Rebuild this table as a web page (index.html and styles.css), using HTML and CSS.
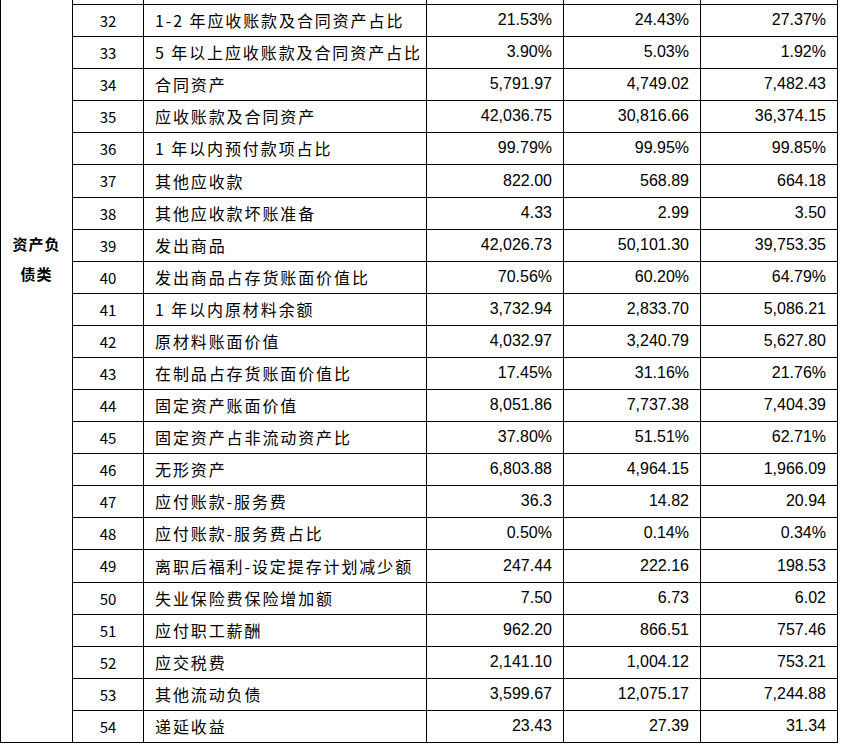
FILE: index.html
```html
<!DOCTYPE html>
<html lang="zh">
<head>
<meta charset="utf-8">
<title>资产负债类指标</title>
<link rel="stylesheet" href="styles.css">
</head>
<body>
<table class="sheet">
  <colgroup>
    <col class="c-cat"><col class="c-no"><col class="c-name"><col class="c-val"><col class="c-val"><col class="c-val">
  </colgroup>
  <tbody>
    <tr class="stub">
      <td class="cat" rowspan="24"><span class="cat-text">资产负<br>债类</span></td>
      <td></td><td></td><td></td><td></td><td></td>
    </tr>
    <tr><td class="no">32</td><td class="name">1-2 年应收账款及合同资产占比</td><td class="val">21.53%</td><td class="val">24.43%</td><td class="val">27.37%</td></tr>
    <tr><td class="no">33</td><td class="name">5 年以上应收账款及合同资产占比</td><td class="val">3.90%</td><td class="val">5.03%</td><td class="val">1.92%</td></tr>
    <tr><td class="no">34</td><td class="name">合同资产</td><td class="val">5,791.97</td><td class="val">4,749.02</td><td class="val">7,482.43</td></tr>
    <tr><td class="no">35</td><td class="name">应收账款及合同资产</td><td class="val">42,036.75</td><td class="val">30,816.66</td><td class="val">36,374.15</td></tr>
    <tr><td class="no">36</td><td class="name">1 年以内预付款项占比</td><td class="val">99.79%</td><td class="val">99.95%</td><td class="val">99.85%</td></tr>
    <tr class="tall"><td class="no">37</td><td class="name">其他应收款</td><td class="val">822.00</td><td class="val">568.89</td><td class="val">664.18</td></tr>
    <tr><td class="no">38</td><td class="name">其他应收款坏账准备</td><td class="val">4.33</td><td class="val">2.99</td><td class="val">3.50</td></tr>
    <tr><td class="no">39</td><td class="name">发出商品</td><td class="val">42,026.73</td><td class="val">50,101.30</td><td class="val">39,753.35</td></tr>
    <tr><td class="no">40</td><td class="name">发出商品占存货账面价值比</td><td class="val">70.56%</td><td class="val">60.20%</td><td class="val">64.79%</td></tr>
    <tr><td class="no">41</td><td class="name">1 年以内原材料余额</td><td class="val">3,732.94</td><td class="val">2,833.70</td><td class="val">5,086.21</td></tr>
    <tr><td class="no">42</td><td class="name">原材料账面价值</td><td class="val">4,032.97</td><td class="val">3,240.79</td><td class="val">5,627.80</td></tr>
    <tr><td class="no">43</td><td class="name">在制品占存货账面价值比</td><td class="val">17.45%</td><td class="val">31.16%</td><td class="val">21.76%</td></tr>
    <tr><td class="no">44</td><td class="name">固定资产账面价值</td><td class="val">8,051.86</td><td class="val">7,737.38</td><td class="val">7,404.39</td></tr>
    <tr><td class="no">45</td><td class="name">固定资产占非流动资产比</td><td class="val">37.80%</td><td class="val">51.51%</td><td class="val">62.71%</td></tr>
    <tr><td class="no">46</td><td class="name">无形资产</td><td class="val">6,803.88</td><td class="val">4,964.15</td><td class="val">1,966.09</td></tr>
    <tr><td class="no">47</td><td class="name">应付账款-服务费</td><td class="val">36.3</td><td class="val">14.82</td><td class="val">20.94</td></tr>
    <tr><td class="no">48</td><td class="name">应付账款-服务费占比</td><td class="val">0.50%</td><td class="val">0.14%</td><td class="val">0.34%</td></tr>
    <tr class="tall"><td class="no">49</td><td class="name">离职后福利-设定提存计划减少额</td><td class="val">247.44</td><td class="val">222.16</td><td class="val">198.53</td></tr>
    <tr><td class="no">50</td><td class="name">失业保险费保险增加额</td><td class="val">7.50</td><td class="val">6.73</td><td class="val">6.02</td></tr>
    <tr><td class="no">51</td><td class="name">应付职工薪酬</td><td class="val">962.20</td><td class="val">866.51</td><td class="val">757.46</td></tr>
    <tr><td class="no">52</td><td class="name">应交税费</td><td class="val">2,141.10</td><td class="val">1,004.12</td><td class="val">753.21</td></tr>
    <tr><td class="no">53</td><td class="name">其他流动负债</td><td class="val">3,599.67</td><td class="val">12,075.17</td><td class="val">7,244.88</td></tr>
    <tr><td class="no">54</td><td class="name">递延收益</td><td class="val">23.43</td><td class="val">27.39</td><td class="val">31.34</td></tr>
  </tbody>
</table>
</body>
</html>
```
FILE: styles.css
```css
html, body {
  margin: 0;
  padding: 0;
  background: #ffffff;
}

.sheet {
  border-collapse: collapse;
  table-layout: fixed;
  width: 838px;
  color: #000000;
  font-family: "Noto Sans CJK SC", "Liberation Sans", sans-serif;
}

.c-cat { width: 72px; }
.c-no { width: 71px; }
.c-name { width: 283px; }
.c-val { width: 137px; }

.sheet td {
  border: 1px solid #000000;
  padding: 0;
  height: 32px;
  box-sizing: border-box;
  vertical-align: middle;
  white-space: nowrap;
  overflow: hidden;
}

.sheet tr { height: 32px; }
.sheet tr.tall { height: 33px; }
.sheet tr.tall td { height: 33px; }

.sheet tr.stub { height: 4px; }
.sheet tr.stub td {
  height: 4px;
  border-top: none;
  line-height: 0;
  font-size: 0;
}

.sheet td.cat {
  vertical-align: top;
  text-align: center;
  border-top: none;
  padding-top: 229px;
  font-size: 15px;
  line-height: 30px;
}

.cat-text {
  font-weight: 700;
  font-size: 15px;
  line-height: 30px;
  letter-spacing: 1px;
}

.no {
  text-align: center;
  font-size: 15px;
}

.name {
  padding-left: 11px !important;
  font-size: 16px;
  letter-spacing: 1.9px;
  line-height: 30px;
}

.val {
  text-align: right;
  padding-right: 11px !important;
  font-family: "Liberation Sans", Arial, sans-serif;
  font-size: 16px;
}
```
